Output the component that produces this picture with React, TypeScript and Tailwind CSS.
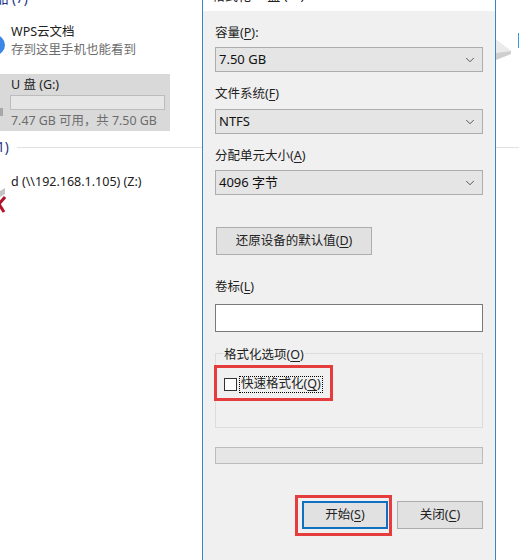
import { ChevronDown } from 'lucide-react'

function Select({ value }: { value: string }) {
  return (
    <div className="flex h-[25px] items-center justify-between border border-[#adadad] bg-[#e5e5e5] pl-[3px] pr-[5px] text-[13px] text-[#111]">
      <span>{value}</span>
      <ChevronDown size={14} strokeWidth={1.25} className="text-[#222]" />
    </div>
  )
}

function Key({ k }: { k: string }) {
  return (
    <>
      (<span className="underline underline-offset-2">{k}</span>)
    </>
  )
}

function Label({ text, k, tail }: { text: string; k: string; tail?: string }) {
  return (
    <div className="h-[18px] text-[12.5px] leading-[18px] text-[#222]">
      {text}
      <Key k={k} />
      {tail}
    </div>
  )
}

function Explorer() {
  return (
    <div className="relative flex h-full w-[202px] shrink-0 flex-col overflow-hidden text-[12.5px] text-[#222]">
      {/* section title, cut by the crop */}
      <div className="-mt-[10px] ml-[-5px] h-[16px] text-[13.5px] leading-[16px] text-[#1e3287]">品 (7)</div>
      <div className="mt-[17px] h-[18px] pl-[11px] leading-[18px]">WPS云文档</div>
      <div className="h-[18px] pl-[11px] leading-[18px] text-[#6d6d6d]">存到这里手机也能看到</div>

      <div className="mt-[15px] flex h-[57px] w-[170px] flex-col bg-[#d9d9d9] pl-[10px] pr-[5px]">
        <div className="h-[21px] pl-[1px] pt-[2px] leading-[18px]">U 盘 (G:)</div>
        <div className="h-[15px] border border-[#bcbcbc] bg-[#e6e6e6]" />
        <div className="mt-[1px] h-[20px] pl-[1px] text-[12.4px] leading-[20px] text-[#6d6d6d]">7.47 GB 可用，共 7.50 GB</div>
      </div>

      <div className="mt-[7px] flex h-[18px] items-center">
        <span className="ml-[-3px] w-[20px] text-[13.5px] text-[#1e3287]">1)</span>
        <div className="h-px flex-1 bg-[#e2e2e2]" />
      </div>

      <div className="mt-[17px] h-[18px] pl-[11px] leading-[18px]">d (\\192.168.1.105) (Z:)</div>

      {/* icons cut by the left edge */}
      <svg className="absolute left-0 top-[33px]" width="6" height="24" viewBox="0 0 6 24">
        <circle cx="-5" cy="12" r="10" fill="#3b87e8" />
        <circle cx="-5" cy="12" r="5" fill="#fff" />
      </svg>
      <div className="absolute left-0 top-[108px] h-[8px] w-[3px] bg-[#a8a8a8]" />
      <svg className="absolute left-0 top-[188px]" width="6" height="26" viewBox="0 0 6 26">
        <path d="M0 3 L5 0 L5 6 L0 9 Z" fill="#c4c4c4" />
        <path d="M5 9 L-1 16 L4 24" stroke="#b3132a" strokeWidth="3" fill="none" />
      </svg>
    </div>
  )
}

function Dialog() {
  return (
    <div className="flex h-full w-[294px] shrink-0 flex-col border-x border-[#3a86c4] text-[12.5px] text-[#222]">
      <div className="h-[11px] shrink-0 overflow-hidden bg-white pl-[9px]">
        <div className="-mt-[14px] text-[13px] leading-[18px] text-[#222]">格式化 U 盘 (G:)</div>
      </div>
      <div className="flex flex-1 flex-col bg-[#f0f0f0] px-[12px]">
        <div className="mt-[13px]">
          <Label text="容量" k="P" tail=":" />
        </div>
        <div className="mt-[5px]">
          <Select value="7.50 GB" />
        </div>
        <div className="mt-[13px]">
          <Label text="文件系统" k="F" />
        </div>
        <div className="mt-[6px]">
          <Select value="NTFS" />
        </div>
        <div className="mt-[13px]">
          <Label text="分配单元大小" k="A" />
        </div>
        <div className="mt-[5px]">
          <Select value="4096 字节" />
        </div>

        <button className="ml-[1px] mt-[32px] flex h-[28px] w-[156px] items-center justify-center border border-[#adadad] bg-[#e1e1e1] text-[12.5px]">
          还原设备的默认值
          <Key k="D" />
        </button>

        <div className="mt-[23px]">
          <Label text="卷标" k="L" />
        </div>
        <div className="mt-[8px] h-[28px] border border-[#7a7a7a] bg-white" />

        {/* options group */}
        <div className="relative mt-[21px] h-[75px] border border-[#dcdcdc]">
          <div className="absolute left-[7px] top-[-8px] bg-[#f0f0f0] px-px text-[12.5px] leading-[18px]">
            格式化选项
            <Key k="O" />
          </div>
          <div className="ml-[8px] mt-[22px] flex items-center gap-[2px]">
            <div className="h-[13px] w-[13px] border border-[#333] bg-white" />
            <div className="flex h-[17px] items-center border border-dotted border-black px-px text-[12.5px]">
              快速格式化
              <Key k="Q" />
            </div>
          </div>
          <div className="absolute left-[-2px] top-[11px] h-[36px] w-[119px] border-[3px] border-[#e53d3d]" />
        </div>

        <div className="mt-[19px] h-[17px] border border-[#bcbcbc] bg-[#e6e6e6]" />

        {/* bottom buttons */}
        <div className="mt-[37px] flex justify-end gap-[9px]">
          <div className="relative">
            <button className="flex h-[28px] w-[86px] items-center justify-center border-2 border-[#0f6fc1] bg-[#e1e1e1] text-[12.5px]">
              开始
              <Key k="S" />
            </button>
            <div className="absolute left-[-7px] top-[-6px] h-[41px] w-[97px] border-[3px] border-[#e53d3d]" />
          </div>
          <button className="flex h-[28px] w-[86px] items-center justify-center border border-[#adadad] bg-[#e1e1e1] text-[12.5px]">
            关闭
            <Key k="C" />
          </button>
        </div>
      </div>
    </div>
  )
}

function RightEdge() {
  return (
    <div className="relative h-full flex-1 overflow-hidden">
      <div className="absolute left-0 right-0 top-[147px] h-px bg-[#e2e2e2]" />
      <svg className="absolute left-0 top-[33px]" width="23" height="30" viewBox="0 0 23 30">
        <path d="M0 7 L15 18 L15 21 L0 27 Z" fill="#cfcfcf" />
        <path d="M0 7 L15 18 L0 20 Z" fill="#ebebeb" />
        <rect x="22" y="0" width="1" height="15" fill="#2f9fe0" />
      </svg>
    </div>
  )
}

export default function App() {
  return (
    <div className="flex h-[560px] w-[519px] overflow-hidden bg-white font-['Noto_Sans','Noto_Sans_CJK_SC',sans-serif]">
      <Explorer />
      <Dialog />
      <RightEdge />
    </div>
  )
}
